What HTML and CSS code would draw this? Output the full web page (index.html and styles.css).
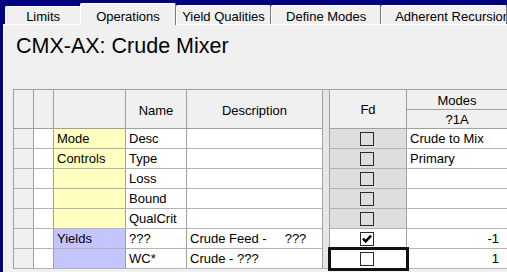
FILE: index.html
```html
<!DOCTYPE html>
<html>
<head>
<meta charset="utf-8">
<link rel="stylesheet" href="styles.css">
</head>
<body>
<div class="window">
  <div class="tabs">
    <div class="tab t-limits">Limits</div>
    <div class="tab active t-ops">Operations</div>
    <div class="tab t-yq">Yield Qualities</div>
    <div class="tab t-dm">Define Modes</div>
    <div class="tab t-ar">Adherent Recursion</div>
  </div>
  <div class="panel">
    <h1 class="title">CMX-AX: Crude Mixer</h1>
    <div class="grid">
      <div class="sep"></div>

      <div class="h span2"></div>
      <div class="h span2"></div>
      <div class="h span2"></div>
      <div class="h span2 low">Name</div>
      <div class="h span2 low">Description</div>
      <div class="h span2">Fd</div>
      <div class="h modes">Modes</div>
      <div class="h sub">?1A</div>

      <div class="c rh"></div><div class="c w"></div><div class="c y">Mode</div><div class="c w">Desc</div><div class="c w"></div><div class="c fd"><span class="cb"></span></div><div class="c w">Crude to Mix</div>
      <div class="c rh"></div><div class="c w"></div><div class="c y">Controls</div><div class="c w">Type</div><div class="c w"></div><div class="c fd"><span class="cb"></span></div><div class="c w">Primary</div>
      <div class="c rh"></div><div class="c w"></div><div class="c y"></div><div class="c w">Loss</div><div class="c w"></div><div class="c fd"><span class="cb"></span></div><div class="c w"></div>
      <div class="c rh"></div><div class="c w"></div><div class="c y"></div><div class="c w">Bound</div><div class="c w"></div><div class="c fd"><span class="cb"></span></div><div class="c w"></div>
      <div class="c rh"></div><div class="c w"></div><div class="c y"></div><div class="c w">QualCrit</div><div class="c w"></div><div class="c fd"><span class="cb"></span></div><div class="c w"></div>
      <div class="c rh"></div><div class="c w"></div><div class="c b">Yields</div><div class="c w">???</div><div class="c w pre">Crude Feed -     ???</div><div class="c w chk"><span class="cb"><svg viewBox="0 0 12 12" width="12" height="12"><path d="M2 5.6 L4.7 8.4 L10 2.6" fill="none" stroke="#000" stroke-width="2.4"/></svg></span></div><div class="c w num">-1</div>
      <div class="c rh"></div><div class="c w"></div><div class="c b"></div><div class="c w">WC*</div><div class="c w">Crude - ???</div><div class="c w chk current"><span class="cb"></span></div><div class="c w num">1</div>
    </div>
  </div>
</div>
</body>
</html>
```
FILE: styles.css
```css
html, body {
  margin: 0;
  padding: 0;
}
body {
  width: 507px;
  height: 272px;
  overflow: hidden;
  background: #000080;
  font-family: "Liberation Sans", Arial, sans-serif;
  font-size: 13px;
  color: #000;
}
.window {
  padding-left: 3px;
  height: 272px;
  display: flex;
  flex-direction: column;
}
.tabs {
  display: flex;
  align-items: flex-end;
  height: 24px;
  padding-left: 2px;
  white-space: nowrap;
}
.tab {
  box-sizing: border-box;
  height: 19px;
  padding-top: 3px;
  line-height: 15px;
  text-align: center;
  background: #f0f0f0;
  border-top: 1px solid #ffffff;
  border-left: 1px solid #ffffff;
  border-right: 1px solid #7a7a7a;
  border-radius: 2px 2px 0 0;
  overflow: hidden;
}
.t-limits { width: 79px; height: 18px; padding-top: 2px; }
.t-ops { width: 99px; }
.t-yq { width: 99px; }
.t-dm { width: 114px; }
.t-ar { width: 130px; text-align: left; padding-left: 13px; }
.tab.active {
  height: 22px;
  padding-top: 5px;
  margin-bottom: -1px;
  position: relative;
  z-index: 1;
  margin-left: -1px;
}
.panel {
  flex: 1;
  background: #f0f0f0;
  border-top: 1px solid #ffffff;
  border-left: 1px solid #ffffff;
}
.title {
  margin: 9px 0 0 12px;
  font-weight: normal;
  font-size: 21.5px;
  line-height: 24px;
  font-family: "Liberation Sans", Arial, sans-serif;
}
.grid {
  margin: 31px 0 0 9px;
  display: grid;
  grid-template-columns: 20px 20px 72px 61px 136px 7px 77px 101px;
  grid-template-rows: 20px 19px repeat(7, 20px);
  border-top: 1px solid #a0a0a0;
  border-left: 1px solid #a0a0a0;
  width: max-content;
}
.grid > div {
  box-sizing: border-box;
  border-right: 1px solid #a0a0a0;
  border-bottom: 1px solid #b4b4b4;
  white-space: nowrap;
  overflow: visible;
}
.sep {
  grid-column: 6;
  grid-row: 1 / -1;
  background: #e6e6e6;
}
.h {
  background: #f0f0f0;
  border-bottom-color: #a0a0a0 !important;
  display: flex;
  align-items: center;
  justify-content: center;
  line-height: 15px;
}
.span2 { grid-row: span 2; }
.low { padding-top: 3px; }
.modes { padding-top: 2px; }
.sub { padding-top: 0; }
.c {
  line-height: 19px;
  padding-left: 3px;
}
.rh { background: #f0f0f0; }
.w { background: #ffffff; }
.y { background: #ffffc0; }
.b { background: #c4c4ff; }
.fd { background: #dedede; }
.fd, .chk {
  display: flex;
  align-items: center;
  justify-content: center;
  padding-left: 0;
  padding-right: 3px;
}
.pre { white-space: pre !important; }
.num {
  text-align: right;
  padding-right: 8px;
}
.cb {
  box-sizing: border-box;
  width: 14px;
  height: 14px;
  border: 1px solid #2a2a2a;
  display: flex;
  align-items: center;
  justify-content: center;
}
.cb svg { display: block; }
.current {
  outline: 3px solid #111;
  outline-offset: -1px;
  position: relative;
  z-index: 1;
}
```
